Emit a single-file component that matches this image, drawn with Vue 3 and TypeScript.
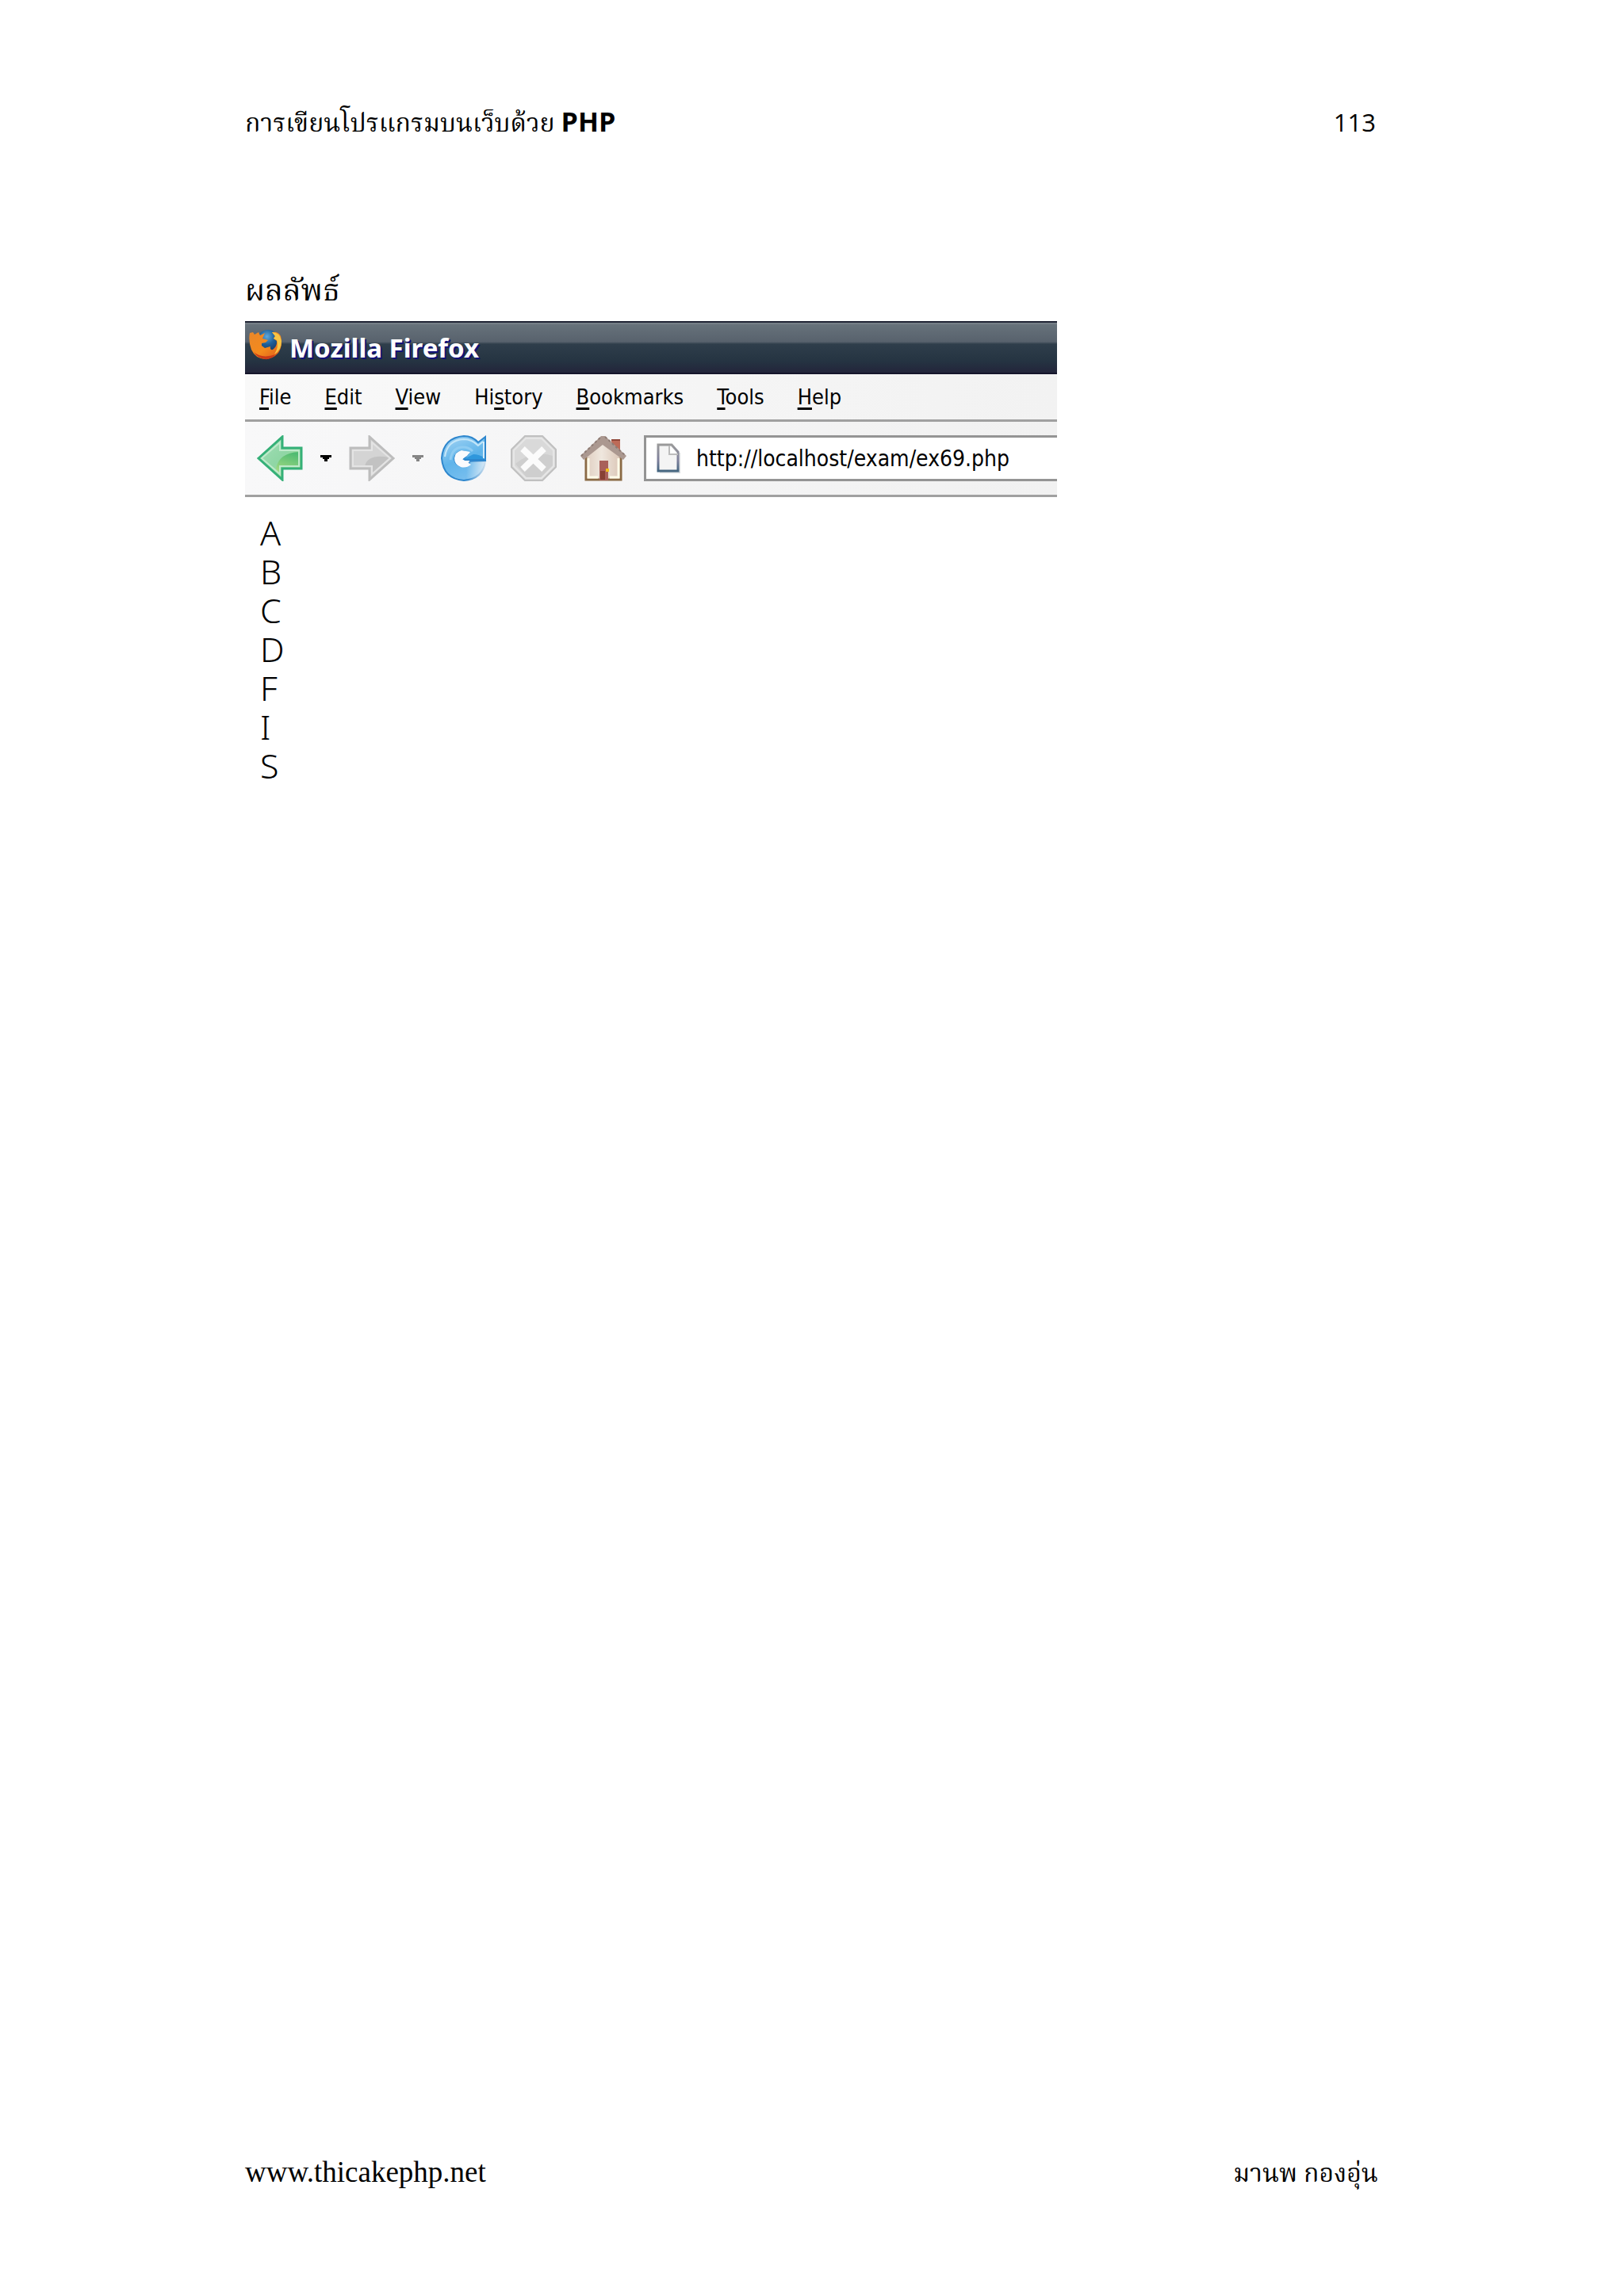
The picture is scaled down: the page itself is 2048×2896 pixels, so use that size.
<script setup lang="ts">
interface MenuEntry {
  before: string
  key: string
  after: string
}

const menus: MenuEntry[] = [
  { before: '', key: 'F', after: 'ile' },
  { before: '', key: 'E', after: 'dit' },
  { before: '', key: 'V', after: 'iew' },
  { before: 'Hi', key: 's', after: 'tory' },
  { before: '', key: 'B', after: 'ookmarks' },
  { before: '', key: 'T', after: 'ools' },
  { before: '', key: 'H', after: 'elp' },
]

const output: string[] = ['A', 'B', 'C', 'D', 'F', 'I', 'S']
</script>

<template>
  <div class="page">
    <header class="running-head">
      <span class="thai">การเขียนโปรแกรมบนเว็บด้วย <b>PHP</b></span>
      <span class="folio">113</span>
    </header>

    <main>
      <h1>ผลลัพธ์</h1>
      <section class="browser">
        <div class="titlebar">
          <svg class="logo" viewBox="0 0 42 38" aria-hidden="true">
            <defs>
              <radialGradient id="globe" cx="0.45" cy="0.3" r="0.7">
                <stop offset="0" stop-color="#5fa9dc" />
                <stop offset="0.5" stop-color="#1f6099" />
                <stop offset="1" stop-color="#173a66" />
              </radialGradient>
              <linearGradient id="fox" x1="0" y1="0" x2="1" y2="1">
                <stop offset="0" stop-color="#e8872a" />
                <stop offset="0.55" stop-color="#f58a1c" />
                <stop offset="1" stop-color="#d9541b" />
              </linearGradient>
            </defs>
            <circle cx="24" cy="14" r="14" fill="url(#globe)" />
            <path d="M1 4 L5 3 L7 6 L12 3 L14 7 L20 4 L17 11 L24 13 L21 16 L16 17 L16 20 L20 23 L27 21 Q26 26 30 25 Q36 20 35 14 L31 11 L33 8 L29 3 Q37 2 40 8 Q43 20 37 29 Q30 37 20 37 Q8 36 3 25 Q-1 14 1 4Z" fill="url(#fox)" />
            <path d="M29 3 Q39 3 41 14 Q41 26 32 31 Q38 21 35 13 L31 11 L33 8Z" fill="#f6c545" />
            <path d="M6 28 Q16 37 34 31 Q27 38 20 37 Q11 36 6 28Z" fill="#cb3a18" />
          </svg>
          <span class="title">Mozilla Firefox</span>
        </div>

        <nav class="menubar">
          <button v-for="m in menus" :key="m.key + m.after" type="button">{{ m.before }}<u>{{ m.key }}</u>{{ m.after }}</button>
        </nav>

        <div class="toolbar">
          <button type="button" class="tool" aria-label="Back">
            <svg viewBox="0 0 58 58">
              <defs>
                <linearGradient id="back" x1="0" y1="0" x2="1" y2="1">
                  <stop offset="0" stop-color="#a5dfb9" />
                  <stop offset="0.5" stop-color="#8fd6a5" />
                  <stop offset="1" stop-color="#b4e08e" />
                </linearGradient>
                <linearGradient id="shade" x1="0.6" y1="0" x2="0.3" y2="1">
                  <stop offset="0" stop-color="#4fbb72" />
                  <stop offset="1" stop-color="#a9dc84" />
                </linearGradient>
              </defs>
              <path d="M2 29 L32 2 V16 H56 V42 H32 V56Z" fill="url(#back)" stroke="#35b078" stroke-width="3" />
              <path d="M24 42 Q28 22 53 21 V39 H29 V49Z" fill="url(#shade)" />
              <path d="M6 29 L29 9 V19 H53 V39 H29 V49Z" fill="none" stroke="#bfeacb" stroke-width="2" />
            </svg>
          </button>
          <button type="button" class="drop" aria-label="Back history">
            <svg viewBox="0 0 14 8"><path d="M0 0H14V3H11V5H9V8H5V5H3V3H0Z" fill="#000" /></svg>
          </button>
          <button type="button" class="tool" aria-label="Forward">
            <svg viewBox="0 0 58 58">
              <path d="M56 29 L26 2 V16 H2 V42 H26 V56Z" fill="#d4d4d4" stroke="#bdbdbd" stroke-width="3" />
              <path d="M20 39 Q24 23 51 28 L29 49 V39Z" fill="#c2c2c2" />
              <path d="M52 29 L29 9 V19 H5 V39 H29 V49Z" fill="none" stroke="#e4e4e4" stroke-width="2" />
            </svg>
          </button>
          <button type="button" class="drop" aria-label="Forward history">
            <svg viewBox="0 0 14 8"><path d="M0 0H14V3H11V5H9V8H5V5H3V3H0Z" fill="#858585" /></svg>
          </button>
          <button type="button" class="tool" aria-label="Reload">
            <svg viewBox="0 0 58 58">
              <defs>
                <linearGradient id="reload" x1="0.3" y1="0" x2="0.7" y2="1">
                  <stop offset="0" stop-color="#9bd0f2" />
                  <stop offset="0.5" stop-color="#5fb4ea" />
                  <stop offset="1" stop-color="#7cc0ef" />
                </linearGradient>
                <linearGradient id="tail" x1="0" y1="0" x2="1" y2="0">
                  <stop offset="0" stop-color="#f5f6f8" stop-opacity="0" />
                  <stop offset="1" stop-color="#f5f6f8" stop-opacity="0.85" />
                </linearGradient>
              </defs>
              <path d="M56 2 V31 H28 L34 24 Q31 20 27 20 Q18 21 17 30 Q18 39 28 39 Q34 39 37 33 H56 Q53 55 29 57 Q3 55 1 29 Q3 3 29 1 Q40 1 47 9Z" fill="url(#reload)" stroke="#2d86cd" stroke-width="2" />
              <path d="M5 27 Q8 6 29 5 Q39 5 47 13 L53 8" fill="none" stroke="#c4e6f9" stroke-width="2" />
              <path d="M12 31 Q14 15 28 15 Q35 15 40 20" fill="none" stroke="#8fccf2" stroke-width="3" />
              <path d="M29 30 L41 24 Q48 24 54 28 V30Z" fill="#2f97dc" />
              <path d="M54 8 V29" stroke="#d3ecfa" stroke-width="2" />
              <path d="M32 33 H58 V58 H32Z" fill="url(#tail)" />
              <path d="M17 29 Q18 21 26 19 L37 21 L33 26 L27 30 L38 37 Q32 42 25 40 Q17 37 17 29Z" fill="#fafbfd" />
            </svg>
          </button>
          <button type="button" class="tool wide" aria-label="Stop">
            <svg viewBox="0 0 58 58">
              <path d="M18 1 H40 L57 18 V40 L40 57 H18 L1 40 V18Z" fill="#d9d9d9" stroke="#c0c0c0" stroke-width="2" />
              <path d="M19 4 H39 L54 19 V39 L39 54 H19 L4 39 V19Z" fill="none" stroke="#e6e6e6" stroke-width="2" />
              <path d="M6 36 Q28 18 53 26 V38 L38 53 H20Z" fill="#cecece" />
              <path d="M15 17 L42 43 M42 17 L15 43" stroke="#fbfbfb" stroke-width="8" />
            </svg>
          </button>
          <button type="button" class="tool wide" aria-label="Home">
            <svg viewBox="0 0 58 58">
              <defs>
                <linearGradient id="wall" x1="0" y1="0" x2="1" y2="0">
                  <stop offset="0" stop-color="#dfcdbf" />
                  <stop offset="0.45" stop-color="#efe7de" />
                  <stop offset="1" stop-color="#d9c3b3" />
                </linearGradient>
              </defs>
              <path d="M39 5 H50 V20 H39Z" fill="#bd6b58" />
              <path d="M39 6 H50" stroke="#8f4638" stroke-width="2" />
              <path d="M6 26 L28 7 L52 27 V57 H6Z" fill="url(#wall)" />
              <path d="M7 28 V56 H51 V28" fill="none" stroke="#8a6a45" stroke-width="3" />
              <path d="M10 29 V53 H22 M37 53 H48 V29" fill="none" stroke="#fffbe9" stroke-width="3" />
              <path d="M24 32 H35 V57 H24Z" fill="#a9605a" />
              <path d="M25 45 H31 V56 H25Z" fill="#874034" />
              <path d="M32 42 h4 v4 h-4Z" fill="#f2bf1c" />
              <path d="M0 26 L26 1 H31 L58 26 L54 31 L28 12 L4 31Z" fill="#ab9890" />
              <path d="M1 26 L26 2 M31 2 L57 26" stroke="#8d7b74" stroke-width="2" stroke-dasharray="3 3" />
            </svg>
          </button>
          <label class="address">
            <svg viewBox="0 0 30 38" aria-hidden="true">
              <defs>
                <linearGradient id="edge" x1="0" y1="0" x2="0" y2="1">
                  <stop offset="0" stop-color="#9a9a9a" />
                  <stop offset="0.6" stop-color="#7d7f9b" />
                  <stop offset="1" stop-color="#44657f" />
                </linearGradient>
              </defs>
              <path d="M4 38 H30 V12" fill="none" stroke="#d9dcdf" stroke-width="3" />
              <path d="M2 2 H19 L27 11 V35 H2Z" fill="#f4f4f4" stroke="url(#edge)" stroke-width="3" />
              <path d="M16 3 V14 H27" fill="#fff" stroke="#bcbcbc" stroke-width="2" />
            </svg>
            <input type="text" aria-label="Address" value="http://localhost/exam/ex69.php" />
          </label>
        </div>

        <div class="output">
          <div v-for="c in output" :key="c">{{ c }}</div>
        </div>
      </section>
    </main>

    <footer>
      <span>www.thicakephp.net</span>
      <span class="thai">มานพ กองอุ่น</span>
    </footer>
  </div>
</template>

<style>
body {
  background: #fff;
}
</style>

<style scoped>
.page {
  box-sizing: border-box;
  min-height: 100vh;
  padding: 128px 310px 130px 309px;
  display: flex;
  flex-direction: column;
  color: #000;
  font-family: "Liberation Serif", "Angsana New", Norasi, Kinnari, "Noto Serif Thai", serif;
}
.running-head,
footer {
  display: flex;
  justify-content: space-between;
  align-items: baseline;
  font-size: 37px;
  line-height: 50px;
}
.thai {
  font-size: 32px;
}
.running-head b,
.folio {
  font-family: "Open Sans", "Noto Sans", sans-serif;
}
.running-head b {
  font-size: 34px;
  font-weight: 700;
}
.folio {
  padding-right: 3px;
  font-size: 31px;
}
h1 {
  margin: 154px 0 6px;
  font-size: 38px;
  line-height: 65px;
  font-weight: 400;
}
.browser {
  max-width: 1024px;
  font-family: "DejaVu Sans Condensed", "DejaVu Sans", sans-serif;
  font-size: 28px;
}
.titlebar {
  box-sizing: border-box;
  height: 67px;
  padding-left: 5px;
  display: flex;
  align-items: center;
  gap: 9px;
  border-top: 2px solid #1f2333;
  border-bottom: 2px solid #15152b;
  background: linear-gradient(#7d858d 0, #66717a 3px, #58626d 24px, #2f3e4b 27px, #253442 48px, #23263b 62px);
}
.logo {
  width: 42px;
  height: 38px;
  margin-bottom: 8px;
}
.title {
  color: #fff;
  font-family: "Noto Sans", sans-serif;
  font-size: 33px;
  line-height: 50px;
  font-weight: 700;
  text-shadow: 2px 2px 0 #12127a;
}
.menubar {
  height: 57px;
  padding-left: 18px;
  display: flex;
  align-items: center;
  gap: 42px;
  border-bottom: 3px solid #a0a0a0;
  background: linear-gradient(90deg, #f9f9f9, #f2f2f2);
  font-size: 27px;
}
button {
  padding: 0;
  border: 0;
  background: none;
  color: inherit;
  font: inherit;
}
.menubar u {
  text-decoration-thickness: 3px;
  text-underline-offset: 4px;
}
.toolbar {
  height: 92px;
  padding-left: 15px;
  display: flex;
  align-items: center;
  gap: 22px;
  border-bottom: 3px solid #a0a0a0;
  background: linear-gradient(90deg, #f8f8f9, #f1f1f1);
}
svg {
  display: block;
}
.tool {
  width: 58px;
  height: 58px;
}
.wide {
  margin-left: 8px;
}
.drop {
  width: 14px;
}
.address {
  box-sizing: border-box;
  flex: 1;
  height: 58px;
  padding-left: 13px;
  display: flex;
  align-items: center;
  gap: 20px;
  border: 3px solid #949494;
  border-right: 0;
  background: #fff;
}
.address svg {
  width: 30px;
  height: 38px;
}
.address input {
  flex: 1;
  min-width: 0;
  padding: 0;
  border: 0;
  outline: 0;
  background: none;
  color: #000;
  font: inherit;
}
.output {
  padding: 20px 19px;
  font-family: "Noto Sans", "Open Sans", sans-serif;
  font-size: 43px;
  line-height: 49px;
  font-weight: 300;
}
footer {
  margin-top: auto;
}
</style>
